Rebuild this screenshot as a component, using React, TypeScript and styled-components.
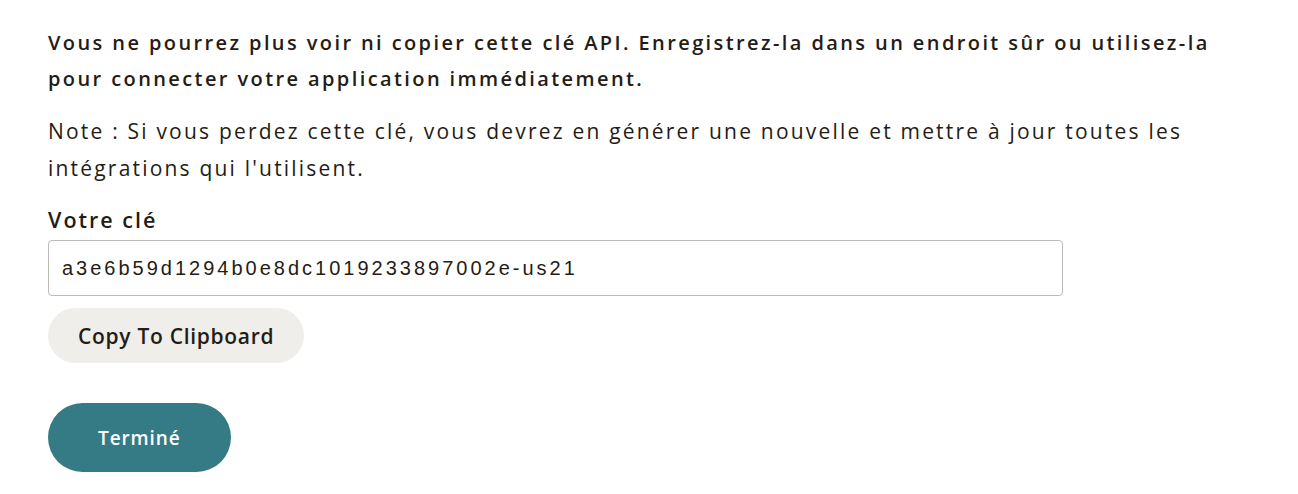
import React from "react";
import styled, { createGlobalStyle } from "styled-components";

const GlobalStyle = createGlobalStyle`
  body {
    margin: 0;
    background: #ffffff;
    font-family: "Open Sans", "Liberation Sans", sans-serif;
    color: #241c15;
  }
`;

const Wrapper = styled.div`
  max-width: 1172px;
  padding: 25px 48px 20px;
`;

const Warning = styled.p`
  margin: 0 0 16px;
  font-size: 20px;
  line-height: 36px;
  font-weight: 600;
  letter-spacing: 2.4px;
`;

const Note = styled.p`
  margin: 0 0 16px;
  font-size: 21px;
  line-height: 37px;
  font-weight: 400;
  letter-spacing: 2.2px;
`;

const Label = styled.label`
  display: block;
  font-size: 21.5px;
  line-height: 34px;
  font-weight: 600;
  letter-spacing: 2px;
  margin-bottom: 3px;
`;

const KeyInput = styled.input`
  box-sizing: border-box;
  display: block;
  width: 1015px;
  height: 56px;
  padding: 0 13px;
  border: 1px solid #bdbbb8;
  border-radius: 4px;
  font-family: "Liberation Sans", Arial, sans-serif;
  font-size: 20px;
  letter-spacing: 3px;
  color: #241c15;
  outline: none;
`;

const Button = styled.button<{ $primary?: boolean }>`
  display: block;
  box-sizing: border-box;
  border: none;
  border-radius: 999px;
  font-family: "Open Sans", "Liberation Sans", sans-serif;
  font-weight: 600;
  cursor: pointer;
  background: ${(p) => (p.$primary ? "#357b86" : "#efeeea")};
  color: ${(p) => (p.$primary ? "#ffffff" : "#241c15")};
  font-size: ${(p) => (p.$primary ? "19px" : "21px")};
  letter-spacing: ${(p) => (p.$primary ? "0.9px" : "0.7px")};
  height: ${(p) => (p.$primary ? "69px" : "55px")};
  padding: ${(p) => (p.$primary ? "0 50px" : "0 30px")};
  margin-top: ${(p) => (p.$primary ? "40px" : "12px")};
`;

export default function App() {
  return (
    <>
      <GlobalStyle />
      <Wrapper>
        <Warning>
          Vous ne pourrez plus voir ni copier cette clé API. Enregistrez-la dans un endroit sûr ou
          utilisez-la pour connecter votre application immédiatement.
        </Warning>
        <Note>
          Note : Si vous perdez cette clé, vous devrez en générer une nouvelle et mettre à jour
          toutes les intégrations qui l'utilisent.
        </Note>
        <Label htmlFor="api-key">Votre clé</Label>
        <KeyInput id="api-key" readOnly value="a3e6b59d1294b0e8dc1019233897002e-us21" />
        <Button>Copy To Clipboard</Button>
        <Button $primary>Terminé</Button>
      </Wrapper>
    </>
  );
}
